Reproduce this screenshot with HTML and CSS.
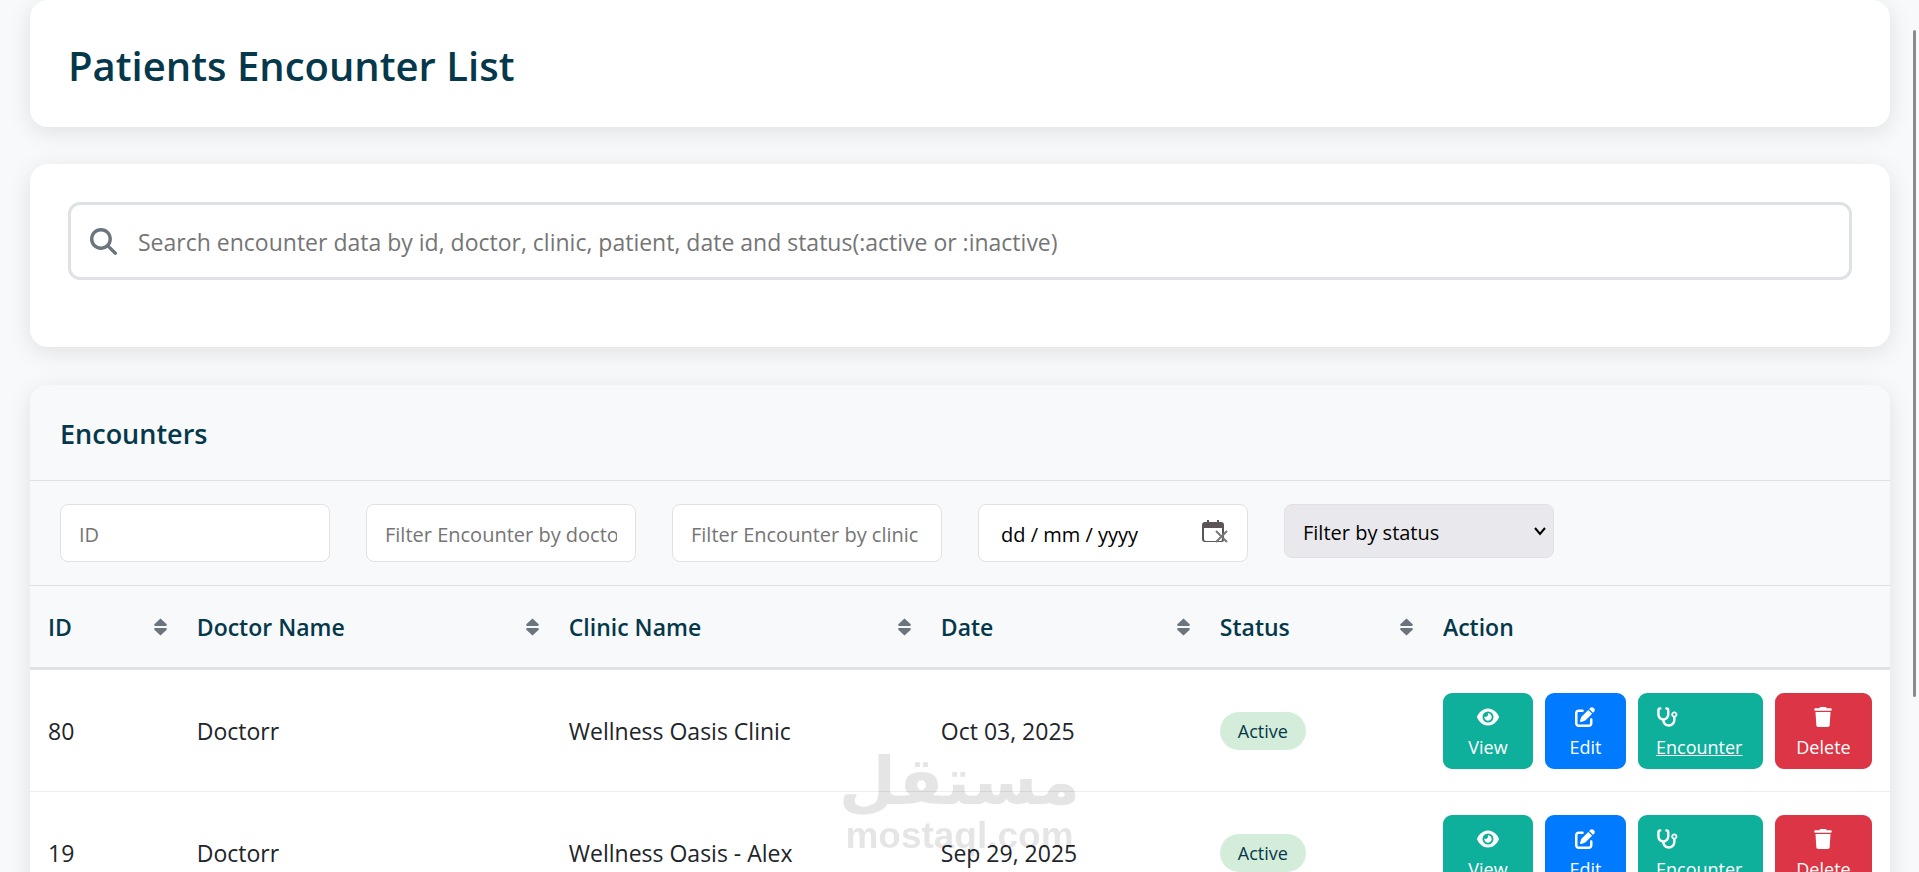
FILE: index.html
```html
<!DOCTYPE html>
<html lang="en">
<head>
  <meta charset="UTF-8">
  <meta name="viewport" content="width=device-width, initial-scale=1.0">
  <title>Patients Encounter List</title>
  <link rel="stylesheet" href="styles.css">
</head>
<body>
  <!-- Icon set -->
  <svg class="icon-set" aria-hidden="true">
    <symbol id="icon-search" viewBox="0 0 512 512">
      <path d="M416 208c0 45.900-14.900 88.300-40 122.700L502.600 457.400c12.500 12.500 12.500 32.800 0 45.300s-32.800 12.500-45.300 0L330.700 376c-34.400 25.200-76.800 40-122.700 40C93.100 416 0 322.900 0 208S93.100 0 208 0S416 93.100 416 208zM208 352a144 144 0 1 0 0-288 144 144 0 1 0 0 288z"/>
    </symbol>
    <symbol id="icon-sort" viewBox="0 0 12 16">
      <path d="M6 0.200L11.700 5.500Q12.200 6.800 11 7H1Q-0.200 6.800 0.300 5.500ZM1 9H11Q12.200 9.200 11.700 10.500L6 15.900L0.300 10.500Q-0.200 9.200 1 9Z"/>
    </symbol>
    <symbol id="icon-eye" viewBox="0 0 576 512">
      <path d="M288 32c-80.800 0-145.500 36.800-192.600 80.600C48.600 156 17.300 208 2.500 243.700c-3.300 7.900-3.300 16.700 0 24.600C17.300 304 48.600 356 95.400 399.400C142.500 443.200 207.200 480 288 480s145.500-36.800 192.600-80.600c46.800-43.500 78.100-95.400 93-131.100c3.300-7.900 3.300-16.700 0-24.600c-14.900-35.700-46.200-87.700-93-131.100C433.500 68.800 368.800 32 288 32zM144 256a144 144 0 1 1 288 0 144 144 0 1 1-288 0zm144-64c0 35.300-28.700 64-64 64c-7.100 0-13.900-1.200-20.300-3.300c-5.500-1.800-11.900 1.600-11.700 7.400c.3 6.900 1.300 13.800 3.200 20.700c13.700 51.200 66.400 81.600 117.600 67.900s81.600-66.400 67.900-117.600c-11.100-41.500-47.800-69.400-88.600-71.100c-5.800-.2-9.200 6.100-7.400 11.700c2.100 6.400 3.300 13.200 3.300 20.300z"/>
    </symbol>
    <symbol id="icon-edit" viewBox="0 0 512 512">
      <path d="M471.600 21.700c-21.900-21.900-57.300-21.900-79.200 0L362.300 51.700l97.900 97.900 30.100-30.100c21.900-21.900 21.900-57.300 0-79.200L471.600 21.700zm-299.200 220c-6.100 6.100-10.800 13.600-13.500 21.900l-29.600 88.800c-2.900 8.600-.6 18.100 5.800 24.600s15.900 8.700 24.600 5.800l88.800-29.600c8.200-2.700 15.700-7.400 21.900-13.500L437.700 172.300 339.700 74.300 172.400 241.700zM96 64C43 64 0 107 0 160V416c0 53 43 96 96 96H352c53 0 96-43 96-96V320c0-17.700-14.300-32-32-32s-32 14.300-32 32v96c0 17.700-14.300 32-32 32H96c-17.700 0-32-14.300-32-32V160c0-17.700 14.300-32 32-32h96c17.700 0 32-14.300 32-32s-14.300-32-32-32H96z"/>
    </symbol>
    <symbol id="icon-stethoscope" viewBox="0 0 576 512">
      <path d="M142.400 21.900c5.600 16.800-3.500 34.900-20.200 40.500L96 71.100V192c0 53 43 96 96 96s96-43 96-96V71.100l-26.100-8.700c-16.800-5.600-25.800-23.700-20.200-40.500s23.700-25.800 40.500-20.200l26.100 8.700C334.400 19.100 352 43.500 352 71.100V192c0 77.200-54.600 141.600-127.300 156.700C231 404.600 278.400 448 336 448c61.900 0 112-50.100 112-112V265.300c-28.300-12.300-48-40.500-48-73.300c0-44.200 35.800-80 80-80s80 35.800 80 80c0 32.800-19.700 61-48 73.300V336c0 97.200-78.800 176-176 176c-92.900 0-168.900-71.900-175.500-163.100C87.200 334.200 32 269.600 32 192V71.100c0-27.500 17.600-52 43.800-60.700l26.100-8.700c16.800-5.600 34.900 3.500 40.500 20.200zM480 224a32 32 0 1 0 0-64 32 32 0 1 0 0 64z"/>
    </symbol>
    <symbol id="icon-trash" viewBox="0 0 448 512">
      <path d="M135.200 17.700C140.600 6.800 151.700 0 163.800 0H284.200c12.100 0 23.200 6.800 28.600 17.700L320 32h96c17.700 0 32 14.300 32 32s-14.300 32-32 32H32C14.300 96 0 81.700 0 64S14.300 32 32 32h96l7.200-14.300zM32 128H416L394.800 467c-1.600 25.300-22.600 45-47.900 45H101.100c-25.300 0-46.300-19.700-47.900-45L32 128z"/>
    </symbol>
    <symbol id="icon-calendar" viewBox="0 0 26 24">
      <path d="M5 0h2v2h8V0h2v2h2q3 0 3 3v15q0 2-2 2H3q-3 0-3-3V5q0-3 3-3h2zM2 8v11q0 2 2 2h15q1 0 1-2V8z" fill-rule="evenodd"/>
      <path d="M14 11L25 22M25 11L14 22" fill="none" stroke="#74777c" stroke-width="2"/>
    </symbol>
  </svg>

  <div class="container">
    <header class="card page-header">
      <h1>Patients Encounter List</h1>
    </header>

    <section class="card search-card">
      <label class="search-box">
        <svg class="search-icon" aria-hidden="true"><use href="#icon-search"/></svg>
        <input type="text" aria-label="Search encounters" placeholder="Search encounter data by id, doctor, clinic, patient, date and status(:active or :inactive)">
      </label>
    </section>

    <main class="card table-card">
      <h2>Encounters</h2>

      <div class="filters">
        <input type="text" aria-label="ID" placeholder="ID">
        <input type="text" aria-label="Doctor" placeholder="Filter Encounter by doctor">
        <input type="text" aria-label="Clinic" placeholder="Filter Encounter by clinic">
        <label class="date-filter">
          <input type="text" aria-label="Date" placeholder="dd / mm / yyyy">
          <svg aria-hidden="true"><use href="#icon-calendar"/></svg>
        </label>
        <div class="select-wrap">
          <select aria-label="Status">
            <option>Filter by status</option>
            <option>Active</option>
            <option>Inactive</option>
          </select>
          <svg viewBox="0 0 14 10" aria-hidden="true"><path d="M2 2l5 6 5-6"/></svg>
        </div>
      </div>

      <table>
        <thead>
          <tr>
            <th class="col-id"><div class="th-inner">ID <svg><use href="#icon-sort"/></svg></div></th>
            <th class="col-name"><div class="th-inner">Doctor Name <svg><use href="#icon-sort"/></svg></div></th>
            <th class="col-name"><div class="th-inner">Clinic Name <svg><use href="#icon-sort"/></svg></div></th>
            <th class="col-date"><div class="th-inner">Date <svg><use href="#icon-sort"/></svg></div></th>
            <th class="col-status"><div class="th-inner">Status <svg><use href="#icon-sort"/></svg></div></th>
            <th class="col-action">Action</th>
          </tr>
        </thead>
        <tbody>
          <tr>
            <td>80</td>
            <td>Doctorr</td>
            <td>Wellness Oasis Clinic</td>
            <td>Oct 03, 2025</td>
            <td><span class="badge">Active</span></td>
            <td>
              <div class="actions">
                <button class="btn btn-view"><svg><use href="#icon-eye"/></svg>View</button>
                <button class="btn btn-edit"><svg><use href="#icon-edit"/></svg>Edit</button>
                <a class="btn btn-encounter" href="#"><svg><use href="#icon-stethoscope"/></svg>Encounter</a>
                <button class="btn btn-delete"><svg><use href="#icon-trash"/></svg>Delete</button>
              </div>
            </td>
          </tr>
          <tr>
            <td>19</td>
            <td>Doctorr</td>
            <td>Wellness Oasis - Alex</td>
            <td>Sep 29, 2025</td>
            <td><span class="badge">Active</span></td>
            <td>
              <div class="actions">
                <button class="btn btn-view"><svg><use href="#icon-eye"/></svg>View</button>
                <button class="btn btn-edit"><svg><use href="#icon-edit"/></svg>Edit</button>
                <a class="btn btn-encounter" href="#"><svg><use href="#icon-stethoscope"/></svg>Encounter</a>
                <button class="btn btn-delete"><svg><use href="#icon-trash"/></svg>Delete</button>
              </div>
            </td>
          </tr>
        </tbody>
      </table>
    </main>
  </div>

  <div class="watermark">
    <span class="watermark-ar" lang="ar">مستقل</span>
    <span class="watermark-en">mostaql.com</span>
  </div>
  <div class="scroll-thumb"></div>
</body>
</html>
```
FILE: styles.css
```css
:root {
  --primary: #0eaf9b;
  --dark: #05384a;
  --background: #f8f9fb;
  --border: #dee2e6;
  --muted: #6c757d;
  --text: #212529;
}

* {
  margin: 0;
  padding: 0;
  box-sizing: border-box;
  font-family: 'Open Sans', 'Noto Sans', sans-serif;
}

body {
  background: var(--background);
  color: var(--text);
  font-size: 23px;
  height: 100vh;
  overflow: hidden;
}

svg {
  fill: currentColor;
}

.icon-set {
  display: none;
}

.container {
  padding: 0 29px 0 30px;
}

.card {
  background: white;
  border-radius: 18px;
  box-shadow: 0 5px 24px rgba(0, 0, 0, 0.1);
  margin-bottom: 37px;
}

.page-header {
  padding: 38px 38px 34px;
}

.page-header h1 {
  color: var(--dark);
  font-size: 40px;
  font-weight: 600;
  line-height: 55px;
}

.search-card {
  padding: 38px 38px 67px;
  margin-bottom: 38px;
}

.search-box {
  display: flex;
  align-items: center;
  height: 78px;
  padding: 0 19px;
  gap: 21px;
  border: 3px solid var(--border);
  border-radius: 12px;
}

.search-icon {
  width: 27px;
  height: 27px;
  color: var(--muted);
}

.search-box input {
  flex: 1;
  padding-top: 2px;
  border: none;
  outline: none;
  background: none;
  font-size: 23px;
}

::placeholder {
  color: #757575;
  opacity: 1;
}

.table-card {
  overflow: hidden;
}

.table-card h2 {
  padding: 26px 30px 23px;
  background: var(--background);
  border-bottom: 1px solid var(--border);
  color: var(--dark);
  font-size: 27px;
  font-weight: 600;
  line-height: 46px;
}

.filters {
  display: flex;
  align-items: flex-start;
  gap: 36px;
  padding: 23px 30px;
  background: var(--background);
  border-bottom: 1px solid var(--border);
}

.filters input,
.filters select {
  width: 270px;
  height: 58px;
  padding: 2px 18px 0;
  background: white;
  border: 1px solid var(--border);
  border-radius: 8px;
  color: black;
  font-size: 20px;
}

.date-filter,
.select-wrap {
  position: relative;
}

.date-filter input {
  padding-left: 22px;
}

.date-filter ::placeholder {
  color: black;
}

.date-filter svg {
  position: absolute;
  top: 16px;
  right: 20px;
  width: 26px;
  height: 24px;
  color: #5b5558;
}

.filters select {
  height: 54px;
  background: #e9e9ed;
  appearance: none;
}

.select-wrap svg {
  position: absolute;
  top: 22px;
  right: 7px;
  width: 14px;
  height: 10px;
  fill: none;
  stroke: black;
  stroke-width: 2;
}

table {
  width: 100%;
  border-collapse: separate;
  border-spacing: 0;
  table-layout: fixed;
}

th {
  height: 84px;
  padding: 0 12px 0 18px;
  background: var(--background);
  border-bottom: 3px solid var(--border);
  color: var(--dark);
  font-weight: 600;
  text-align: left;
}

.th-inner {
  display: flex;
  align-items: center;
  justify-content: space-between;
}

.th-inner svg {
  width: 13px;
  height: 18px;
  color: var(--muted);
}

.col-id { width: 8%; }
.col-name { width: 20%; }
.col-date { width: 15%; }
.col-status { width: 12%; }
.col-action { width: 25%; }

td {
  height: 122px;
  padding: 0 18px;
  border-bottom: 1px solid #ebedef;
}

.badge {
  display: inline-block;
  padding: 0 18px;
  background: #d4edda;
  border-radius: 19px;
  color: var(--dark);
  font-size: 18px;
  line-height: 38px;
}

.actions {
  display: flex;
  gap: 12px;
}

.btn {
  display: flex;
  flex-direction: column;
  align-items: center;
  height: 76px;
  padding: 14px 0 0;
  border: none;
  border-radius: 9px;
  color: white;
  font-size: 18px;
  line-height: 24px;
  cursor: pointer;
}

.btn svg {
  width: 22px;
  height: 20px;
  margin-bottom: 8px;
}

.btn-view {
  width: 90px;
  background: var(--primary);
}

.btn-edit {
  width: 81px;
  background: #007bff;
}

.btn-encounter {
  width: 125px;
  padding-left: 18px;
  align-items: flex-start;
  background: var(--primary);
}

.btn-delete {
  width: 97px;
  background: #dc3545;
}

.watermark {
  position: fixed;
  left: 0;
  right: 0;
  bottom: 16px;
  display: flex;
  flex-direction: column;
  align-items: center;
  color: black;
  opacity: 0.1;
  pointer-events: none;
}

.watermark-ar {
  font-family: 'DejaVu Sans', sans-serif;
  font-size: 66px;
  font-weight: bold;
  line-height: 68px;
}

.watermark-en {
  font-family: 'Liberation Sans', sans-serif;
  font-size: 37px;
  font-weight: bold;
  line-height: 40px;
}

.scroll-thumb {
  position: fixed;
  top: 30px;
  right: 3px;
  width: 3px;
  height: 76.5vh;
  background: #8a8c8b;
  border-radius: 2px;
}
```
